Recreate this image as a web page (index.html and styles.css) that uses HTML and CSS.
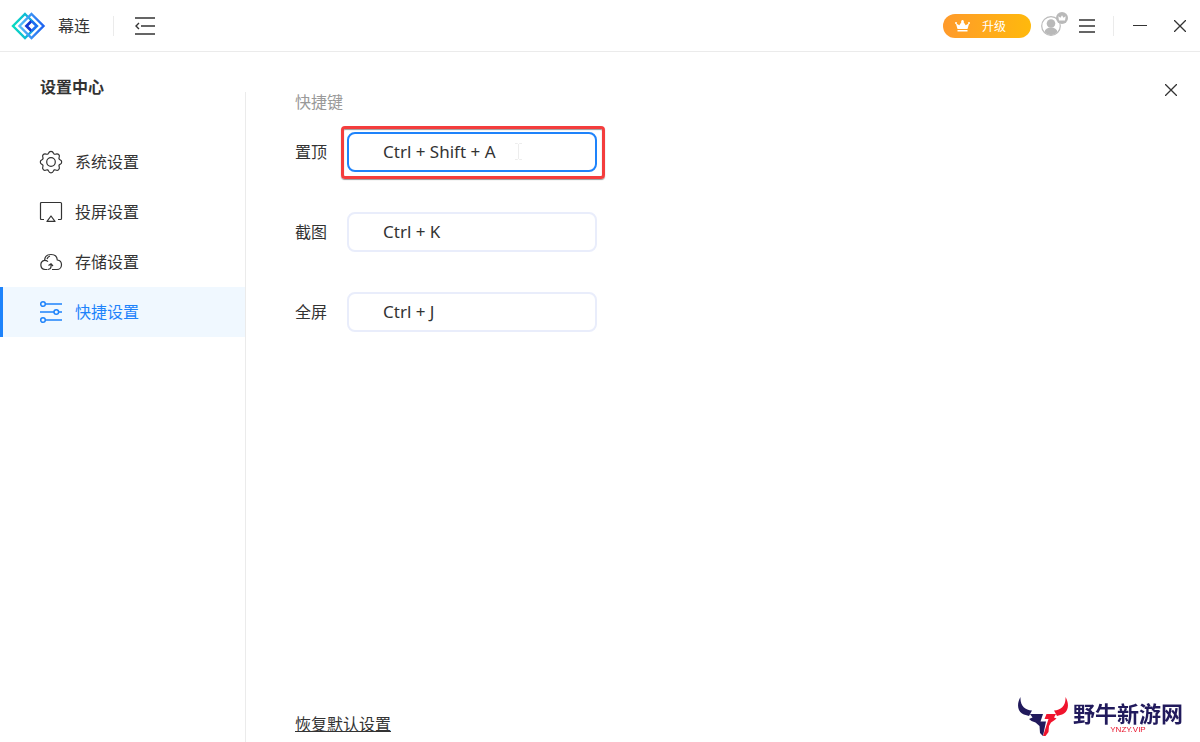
FILE: index.html
```
<!DOCTYPE html>
<html lang="zh-CN">
<head>
    <meta charset="UTF-8">
    <meta name="viewport" content="width=device-width, initial-scale=1.0">
    <title>幕连 - 设置中心</title>
    <link rel="stylesheet" href="styles.css">
</head>
<body>

<!-- Title bar -->
<header class="titlebar">
    <svg class="logo" width="36" height="30" viewBox="0 0 36 30" fill="none" stroke-width="2.4">
        <defs>
            <linearGradient id="teal" x1="0" y1="0" x2="1" y2="0">
                <stop offset="0" stop-color="#08dcc0"/>
                <stop offset="1" stop-color="#149be8"/>
            </linearGradient>
            <linearGradient id="blue" x1="0" y1="0" x2="1" y2="0">
                <stop offset="0" stop-color="#55bdf8"/>
                <stop offset="1" stop-color="#1d62f0"/>
            </linearGradient>
        </defs>
        <path d="M15 3 27 15 15 27 3 15Z" stroke="url(#teal)"/>
        <path d="M21.500 3 33.500 15l-12 12-12-12Z" stroke="url(#blue)"/>
        <path d="M21.500 10l-5 5 5 5" stroke="#1538d0" stroke-width="2.800"/>
        <path d="M21.500 10l5 5-5 5" stroke="#1f6cf2"/>
    </svg>
    <span class="app-name">幕连</span>
    <span class="divider"></span>
    <button class="icon-btn collapse" type="button" aria-label="收起">
        <svg width="20" height="18" viewBox="0 0 20 18" fill="none" stroke="#333" stroke-width="1.4">
            <path d="M0 1h20M6 9h14M0 17h20"/>
            <path d="M4 6 1 9l3 3"/>
        </svg>
    </button>

    <div class="actions">
        <button class="upgrade" type="button">
            <svg width="15" height="12" viewBox="0 0 15 12" fill="#fff">
                <path d="M2.500 9 .8 3.200l3.500 2L7.500.5l3.200 4.700 3.500-2L12.500 9ZM2.500 10h10v1.400h-10Z"/>
                <circle cx="1" cy="3" r="1"/>
                <circle cx="7.500" cy="1.200" r="1.200"/>
                <circle cx="14" cy="3" r="1"/>
            </svg>
            <span>升级</span>
        </button>
        <button class="icon-btn account" type="button" aria-label="账户">
            <svg width="28" height="26" viewBox="0 0 28 26">
                <circle cx="10" cy="15" r="9.300" fill="#fff" stroke="#bbb" stroke-width="1.200"/>
                <circle cx="10" cy="12.500" r="4.300" fill="#b9b9b9"/>
                <path d="M3.500 21c.6-3 3-4.500 6.500-4.500s5.900 1.500 6.500 4.500c-3.600 4-9.400 4-13 0Z" fill="#b9b9b9"/>
                <circle cx="21" cy="7" r="6" fill="#b9b9b9"/>
                <path d="M18 9.500 17.300 5.300l2.200 1.500L21 4.200l1.500 2.600 2.200-1.500L24 9.500Z" fill="#fff"/>
            </svg>
        </button>
        <button class="icon-btn menu" type="button" aria-label="菜单">
            <svg width="16" height="14" viewBox="0 0 16 14" fill="none" stroke="#333" stroke-width="1.3">
                <path d="M0 1h16M0 7h16M0 13h16"/>
            </svg>
        </button>
        <span class="divider"></span>
        <button class="icon-btn minimize" type="button" aria-label="最小化">
            <svg width="14" height="12" viewBox="0 0 14 12" stroke="#333" stroke-width="1">
                <path d="M0 5.500h14"/>
            </svg>
        </button>
        <button class="icon-btn quit" type="button" aria-label="关闭">
            <svg width="12" height="12" viewBox="0 0 12 12" stroke="#333" stroke-width="1.3">
                <path d="M0 0l12 12M12 0 0 12"/>
            </svg>
        </button>
    </div>
</header>

<div class="layout">
    <!-- Settings navigation -->
    <aside class="sidebar">
        <h1>设置中心</h1>
        <nav>
            <a class="nav-item" href="#system">
                <svg width="24" height="24" viewBox="0 0 24 24" fill="none" stroke="#333" stroke-width="1.200">
                    <path d="M9.500 3.200C10 1.800 10.800 1.300 12 1.300s2 .5 2.500 1.900c.4 1 1.200 1.300 2.200.9 1.300-.6 2.200-.4 3 .4s1 1.700.4 3c-.4 1-.1 1.800.9 2.200 1.300.5 1.700 1.200 1.700 2.300s-.4 1.900-1.700 2.400c-1 .4-1.300 1.200-.9 2.200.6 1.300.4 2.200-.4 3s-1.700 1-3 .4c-1-.4-1.800-.1-2.200.9-.5 1.400-1.300 1.900-2.500 1.900s-2-.5-2.500-1.900c-.4-1-1.200-1.300-2.200-.9-1.300.6-2.200.4-3-.4s-1-1.700-.4-3c.4-1 .1-1.800-.9-2.200-1.300-.5-1.700-1.300-1.700-2.400s.4-1.800 1.700-2.300c1-.4 1.300-1.200.9-2.200-.6-1.300-.4-2.200.4-3s1.700-1 3-.4c1 .4 1.800.1 2.200-.9Z"/>
                    <circle cx="12" cy="12" r="4.300"/>
                </svg>
                <span>系统设置</span>
            </a>
            <a class="nav-item" href="#cast">
                <svg width="24" height="24" viewBox="0 0 24 24" fill="none" stroke="#333" stroke-width="1.200">
                    <path d="M5 19.500H2.500q-1 0-1-1v-15q0-1 1-1h19q1 0 1 1v15q0 1-1 1H19"/>
                    <path d="M12 16l4 5.400H8Z" stroke-linejoin="round"/>
                </svg>
                <span>投屏设置</span>
            </a>
            <a class="nav-item" href="#storage">
                <svg width="24" height="24" viewBox="0 0 24 24" fill="none" stroke="#333" stroke-width="1.200">
                    <path d="M8.500 19.500H6a4.600 4.600 0 0 1-.4-9.100C5.800 6.800 8.300 4.500 12 4.500s6 2.400 6.300 5.500c2.600.3 4.200 2.300 4.200 4.700 0 2.800-2 4.800-4.500 4.800h-5"/>
                    <path d="M5.600 10.400c1.500 0 2.500.4 3.400 1.200M8 9c.5-1.500 1.500-2.500 3-3M9.500 15.500l2.500-1.700 2 2.200M12 14v3q-.2 2-3 2.500"/>
                </svg>
                <span>存储设置</span>
            </a>
            <a class="nav-item active" href="#shortcut">
                <svg width="24" height="24" viewBox="0 0 24 24" fill="none" stroke="#1e83fb" stroke-width="1.500">
                    <path d="M6.500 4h16.500M1 12h14M19.500 12H23M6.500 20h16.500"/>
                    <circle cx="4" cy="4" r="2.300"/>
                    <circle cx="17.300" cy="12" r="2.300"/>
                    <circle cx="4" cy="20" r="2.300"/>
                </svg>
                <span>快捷设置</span>
            </a>
        </nav>
    </aside>

    <!-- Shortcut settings -->
    <main class="content">
        <button class="icon-btn close" type="button" aria-label="关闭设置">
            <svg width="12" height="12" viewBox="0 0 12 12" stroke="#333" stroke-width="1.3">
                <path d="M0 0l12 12M12 0 0 12"/>
            </svg>
        </button>
        <form class="shortcuts">
            <h2>快捷键</h2>
            <div class="row">
                <label for="pin">置顶</label>
                <div class="field highlight">
                    <input class="current" type="text" id="pin" value="Ctrl + Shift + A">
                    <svg class="caret" width="7" height="17" viewBox="0 0 7 17" fill="none" stroke="#ededed">
                        <path d="M0 .5h2.500l1 1 1-1H7M3.500 1v15M0 16.500h2.500l1-1 1 1H7"/>
                    </svg>
                </div>
            </div>
            <div class="row">
                <label for="capture">截图</label>
                <div class="field">
                    <input type="text" id="capture" value="Ctrl + K">
                </div>
            </div>
            <div class="row">
                <label for="fullscreen">全屏</label>
                <div class="field">
                    <input type="text" id="fullscreen" value="Ctrl + J">
                </div>
            </div>
        </form>
        <a class="reset" href="#reset">恢复默认设置</a>
    </main>
</div>

<!-- Site mark over the page corner -->
<div class="watermark">
    <svg width="50" height="40" viewBox="0 0 50 40">
        <path d="M2.500 0C-1 6-1 13 4 16.500c2.500 1.500 5 1.500 7 2.500l3-5.500C7 13 2 9 2.500 0Z" fill="#211a5c"/>
        <path d="M12 17h13l-2.500 7.500H28L25 39l-3-3-.5-7-4-3.500-4-1.500-2.500-2 3.500-1.500Z" fill="#211a5c"/>
        <path d="M47.500 0C51 6 51 13 46 16.500c-2.500 1.500-5 1.500-7 2.500l-3-5.500C43 13 48 9 47.500 0Z" fill="#f0142d"/>
        <path d="M28.500 17H38l-2 3.500 2.500 1-2.500 2-3 2L31 29l-.5 6-3 4H25l5.500-17h-4Z" fill="#f0142d"/>
    </svg>
    <div class="mark-text">
        <strong>野牛新游网</strong>
        <span>YNZY.VIP</span>
    </div>
</div>

</body>
</html>
```
FILE: styles.css
```
* {
    box-sizing: border-box;
}
body {
    font-family: "Open Sans", "Noto Sans CJK SC", sans-serif;
    font-size: 16px;
    line-height: 24px;
    background-color: #fff;
    color: #333;
    display: flex;
    flex-direction: column;
    min-height: 100vh;
    margin: 0;
}
h1, h2 {
    font-size: 16px;
    margin: 0;
}
svg {
    display: block;
    flex: none;
}
button {
    font-family: inherit;
    border: none;
    padding: 0;
    cursor: pointer;
}
.icon-btn {
    background: none;
}

/* title bar */
.titlebar {
    display: flex;
    align-items: center;
    height: 52px;
    padding: 0 14px 0 10px;
    border-bottom: 1px solid #ebebeb;
}
.app-name {
    margin-left: 12px;
}
.divider {
    width: 1px;
    height: 20px;
    background-color: #ebebeb;
}
.titlebar > .divider {
    margin: 0 21px 0 23px;
}
.actions {
    display: flex;
    align-items: center;
    margin-left: auto;
}
.upgrade {
    display: flex;
    align-items: center;
    gap: 12px;
    width: 88px;
    height: 24px;
    padding-left: 12px;
    border-radius: 12px;
    background: linear-gradient(to right, #ff9a2b, #ffb90c);
    color: #fff;
    font-size: 12px;
}
.account {
    margin: -4px 10px 0;
}
.menu {
    margin-right: 18px;
}
.minimize {
    margin: 0 27px 0 19px;
}

/* page */
.layout {
    flex: 1;
    display: flex;
}
.sidebar {
    position: relative;
    width: 246px;
    padding: 23px 1px 0 0;
}
.sidebar::after {
    content: "";
    position: absolute;
    top: 40px;
    right: 0;
    bottom: 0;
    width: 1px;
    background-color: #ebebeb;
}
.sidebar h1 {
    padding-left: 40px;
}
.sidebar nav {
    margin-top: 38px;
}
.nav-item {
    display: flex;
    align-items: center;
    gap: 12px;
    height: 50px;
    padding-left: 36px;
    border-left: 3px solid transparent;
    color: #333;
    text-decoration: none;
}
.nav-item.active {
    border-left-color: #1e83fb;
    background-color: #f0f8ff;
    color: #1e83fb;
}
.content {
    position: relative;
    flex: 1;
    display: flex;
    flex-direction: column;
    align-items: flex-start;
    padding: 38px 49px 6px;
}
.close {
    position: absolute;
    top: 32px;
    right: 23px;
}
.shortcuts {
    display: grid;
    gap: 40px;
}
.shortcuts h2 {
    color: #999;
    font-weight: normal;
    margin-bottom: -22px;
}
.row {
    display: flex;
    align-items: center;
    gap: 20px;
}
.field {
    position: relative;
}
.field input {
    display: block;
    width: 250px;
    height: 40px;
    padding: 0 34px 2px;
    border: 2px solid #e9edfb;
    border-radius: 8px;
    background-color: #fff;
    color: #333;
    font-family: "Noto Sans", sans-serif;
    font-size: 17px;
    outline: none;
}
.field input.current {
    border-color: #1e83fb;
}
.highlight::after {
    content: "";
    position: absolute;
    inset: -6px -8px -7px -6px;
    border: 3px solid #f43d3d;
    border-radius: 4px;
    box-shadow: inset 0 1px 1px #999, 0 1px 1px #999;
    pointer-events: none;
}
.caret {
    position: absolute;
    top: 11px;
    left: 168px;
}
.reset {
    margin-top: auto;
    color: #333;
}

/* watermark */
.watermark {
    position: fixed;
    right: 17px;
    bottom: 5px;
    display: flex;
    align-items: center;
    gap: 5px;
}
.mark-text {
    display: flex;
    flex-direction: column;
    align-items: center;
}
.mark-text strong {
    color: #211a5c;
    font-size: 22px;
    line-height: 26px;
}
.mark-text span {
    color: #e8132b;
    font-family: "Liberation Sans", sans-serif;
    font-size: 8px;
    line-height: 8px;
}
```
